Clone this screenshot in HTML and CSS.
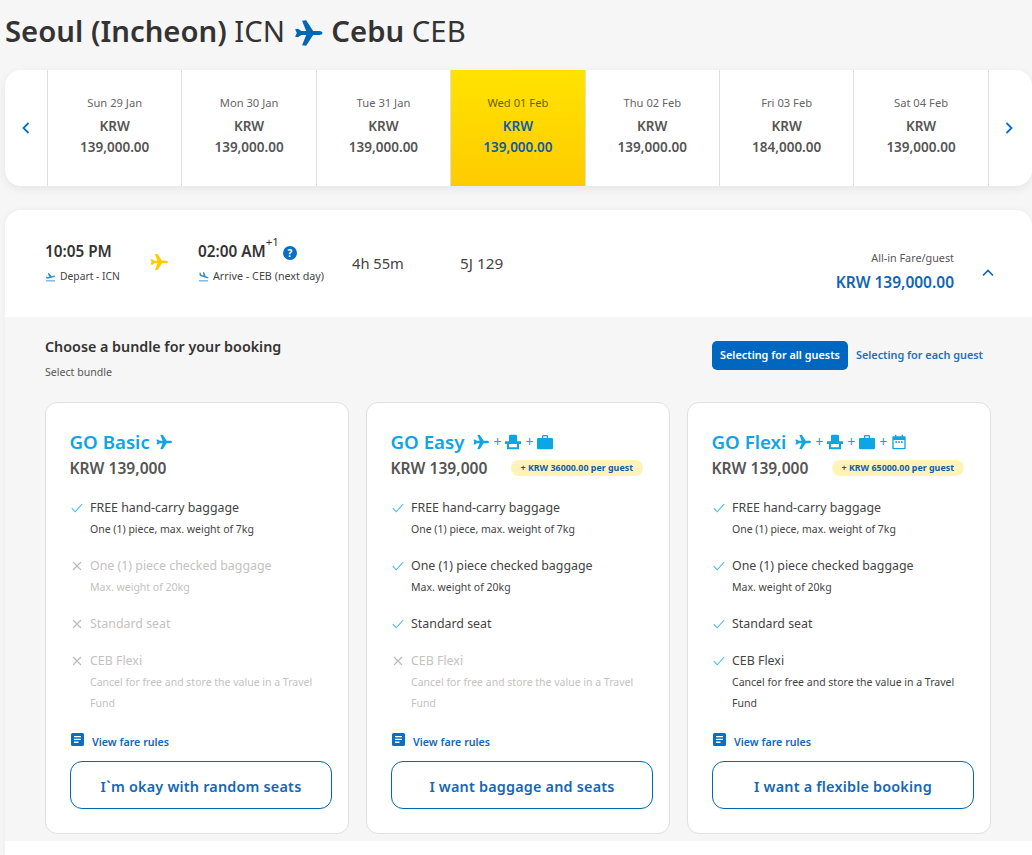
FILE: index.html
```html
<!DOCTYPE html>
<html lang="en">
<head>
<meta charset="utf-8">
<title>Select flight</title>
<link rel="stylesheet" href="styles.css">
</head>
<body>
<svg class="defs" width="0" height="0" aria-hidden="true">
  <symbol id="plane" viewBox="0 0 24 24"><path d="M.5 8.800 3 8.300 5.800 10.300h4.200L6.500 1.500 10 1l6 9.300h5c1.700 0 3 .8 3 1.700s-1.300 1.700-3 1.700h-5L10 23l-3.500-.5 3.500-8.800H5.800L3 15.700.5 15.200 2 12z"/></symbol>
  <symbol id="seat" viewBox="0 0 24 24"><path d="M8 1h8a2 2 0 0 1 2 2v8H6V3a2 2 0 0 1 2-2zM0 11h24v4h-3v8H3v-8H0zM6 15v5h12v-5z" fill-rule="evenodd"/></symbol>
  <symbol id="bag" viewBox="0 0 24 24"><path d="M7.500 6V3.500A2 2 0 0 1 9.500 1.500h5a2 2 0 0 1 2 2V6H22a2 2 0 0 1 2 2v13a2 2 0 0 1-2 2H2a2 2 0 0 1-2-2V8a2 2 0 0 1 2-2zM9.500 3.500V6h5V3.500z" fill-rule="evenodd"/></symbol>
  <symbol id="cal" viewBox="0 0 24 24"><path d="M6 1h2v2.500h8V1h2v2.500h2.500A1.500 1.500 0 0 1 22 5v16.500a1.500 1.500 0 0 1-1.500 1.500h-17A1.500 1.500 0 0 1 2 21.500V5a1.500 1.500 0 0 1 1.500-1.500H6zM4 9v12h16V9zM6.500 11h2.500v2.500H6.500zM10.800 11h2.500v2.500h-2.500zM15 11h2.500v2.500H15z" fill-rule="evenodd"/></symbol>
  <symbol id="check" viewBox="0 0 12 10"><path d="M.8 5.200 4.200 8.800 11.200 1" fill="none" stroke="currentColor" stroke-width="1.100"/></symbol>
  <symbol id="cross" viewBox="0 0 10 10"><path d="M1 1l8 8M9 1 1 9" fill="none" stroke="currentColor" stroke-width="1.100"/></symbol>
  <symbol id="doc" viewBox="0 0 13 13"><path d="M1.500 0h10A1.500 1.500 0 0 1 13 1.500v10a1.500 1.500 0 0 1-1.500 1.500h-10A1.500 1.500 0 0 1 0 11.500v-10A1.500 1.500 0 0 1 1.500 0zM3 3v1.300h7V3zM3 5.800v1.300h7V5.800zM3 8.600v1.300h4.500V8.600z" fill-rule="evenodd"/></symbol>
</svg>

<main class="page">
  <h1 class="route">
    <b>Seoul (Incheon)</b> ICN
    <svg class="route-plane"><use href="#plane"/></svg>
    <b>Cebu</b> CEB
  </h1>

  <section class="dates">
    <button class="nav nav-prev"><svg width="8" height="12" viewBox="0 0 8 12"><path d="M6.500 1 1.500 6l5 5" fill="none" stroke="currentColor" stroke-width="1.800"/></svg></button>
    <div class="day"><span class="day-name">Sun 29 Jan</span><strong>KRW</strong><strong>139,000.00</strong></div>
    <div class="day"><span class="day-name">Mon 30 Jan</span><strong>KRW</strong><strong>139,000.00</strong></div>
    <div class="day"><span class="day-name">Tue 31 Jan</span><strong>KRW</strong><strong>139,000.00</strong></div>
    <div class="day day-on"><span class="day-name">Wed 01 Feb</span><strong>KRW</strong><strong>139,000.00</strong></div>
    <div class="day"><span class="day-name">Thu 02 Feb</span><strong>KRW</strong><strong>139,000.00</strong></div>
    <div class="day"><span class="day-name">Fri 03 Feb</span><strong>KRW</strong><strong>184,000.00</strong></div>
    <div class="day"><span class="day-name">Sat 04 Feb</span><strong>KRW</strong><strong>139,000.00</strong></div>
    <button class="nav nav-next"><svg width="8" height="12" viewBox="0 0 8 12"><path d="M1.500 1 6.500 6l-5 5" fill="none" stroke="currentColor" stroke-width="1.800"/></svg></button>
  </section>

  <section class="panel">
    <header class="flight">
      <div class="time-col dep">
        <div class="time">10:05 PM</div>
        <div class="sub"><svg class="sub-icon" viewBox="0 0 12 12"><path d="M1 7.500 1.600 6l1.400.8 1.700-.4L3 2.700l1.300-.4 3 3.500 2.400-.7c.6-.2 1.200 0 1.300.4s-.2.800-.8 1L3 8.400z"/><rect x="1" y="10" width="10" height="1.400" opacity=".7"/></svg>Depart - ICN</div>
      </div>
      <svg class="flight-plane"><use href="#plane"/></svg>
      <div class="time-col arr">
        <div class="time">02:00 AM<sup>+1</sup><span class="help">?</span></div>
        <div class="sub"><svg class="sub-icon" viewBox="0 0 12 12"><path d="M1.500 2l1.200-.3 1 2.600 2.200.6L5.500 1l1.300.3 1.600 4.500 2.300.7c.6.200.9.600.8 1s-.7.500-1.300.3L2 5.500z"/><rect x="1" y="10" width="10" height="1.400" opacity=".7"/></svg>Arrive - CEB (next day)</div>
      </div>
      <div class="duration">4h 55m</div>
      <div class="flight-no">5J 129</div>
      <div class="fare">
        <div class="fare-label">All-in Fare/guest</div>
        <div class="fare-price">KRW 139,000.00</div>
      </div>
      <svg class="collapse" width="12" height="8" viewBox="0 0 12 8"><path d="M1 6.500 6 1.500l5 5" fill="none" stroke="currentColor" stroke-width="1.700"/></svg>
    </header>

    <div class="bundles">
      <div class="bundles-head">
        <div>
          <h2>Choose a bundle for your booking</h2>
          <p class="select">Select bundle</p>
        </div>
        <div class="toggle">
          <span class="toggle-on">Selecting for all guests</span>
          <span class="toggle-off">Selecting for each guest</span>
        </div>
      </div>

      <div class="cards">
        <article class="card">
          <h3>GO Basic <span class="icons icons-basic"><svg class="ic"><use href="#plane"/></svg></span></h3>
          <div class="price-row"><span class="price">KRW 139,000</span></div>
          <ul class="feat">
            <li><svg class="mark yes"><use href="#check"/></svg><div>FREE hand-carry baggage<small>One (1) piece, max. weight of 7kg</small></div></li>
            <li class="off"><svg class="mark"><use href="#cross"/></svg><div>One (1) piece checked baggage<small>Max. weight of 20kg</small></div></li>
            <li class="off"><svg class="mark"><use href="#cross"/></svg><div>Standard seat</div></li>
            <li class="off"><svg class="mark"><use href="#cross"/></svg><div>CEB Flexi<small>Cancel for free and store the value in a Travel Fund</small></div></li>
          </ul>
          <a class="rules"><svg class="doc"><use href="#doc"/></svg>View fare rules</a>
          <button class="cta">I`m okay with random seats</button>
        </article>

        <article class="card">
          <h3>GO Easy <span class="icons"><svg class="ic"><use href="#plane"/></svg><i>+</i><svg class="ic"><use href="#seat"/></svg><i>+</i><svg class="ic"><use href="#bag"/></svg></span></h3>
          <div class="price-row"><span class="price">KRW 139,000</span><span class="extra">+ KRW 36000.00 per guest</span></div>
          <ul class="feat">
            <li><svg class="mark yes"><use href="#check"/></svg><div>FREE hand-carry baggage<small>One (1) piece, max. weight of 7kg</small></div></li>
            <li><svg class="mark yes"><use href="#check"/></svg><div>One (1) piece checked baggage<small>Max. weight of 20kg</small></div></li>
            <li><svg class="mark yes"><use href="#check"/></svg><div>Standard seat</div></li>
            <li class="off"><svg class="mark"><use href="#cross"/></svg><div>CEB Flexi<small>Cancel for free and store the value in a Travel Fund</small></div></li>
          </ul>
          <a class="rules"><svg class="doc"><use href="#doc"/></svg>View fare rules</a>
          <button class="cta">I want baggage and seats</button>
        </article>

        <article class="card">
          <h3>GO Flexi <span class="icons"><svg class="ic"><use href="#plane"/></svg><i>+</i><svg class="ic"><use href="#seat"/></svg><i>+</i><svg class="ic"><use href="#bag"/></svg><i>+</i><svg class="ic"><use href="#cal"/></svg></span></h3>
          <div class="price-row"><span class="price">KRW 139,000</span><span class="extra">+ KRW 65000.00 per guest</span></div>
          <ul class="feat">
            <li><svg class="mark yes"><use href="#check"/></svg><div>FREE hand-carry baggage<small>One (1) piece, max. weight of 7kg</small></div></li>
            <li><svg class="mark yes"><use href="#check"/></svg><div>One (1) piece checked baggage<small>Max. weight of 20kg</small></div></li>
            <li><svg class="mark yes"><use href="#check"/></svg><div>Standard seat</div></li>
            <li><svg class="mark yes"><use href="#check"/></svg><div>CEB Flexi<small>Cancel for free and store the value in a Travel Fund</small></div></li>
          </ul>
          <a class="rules"><svg class="doc"><use href="#doc"/></svg>View fare rules</a>
          <button class="cta">I want a flexible booking</button>
        </article>
      </div>
    </div>
  </section>
</main>
</body>
</html>
```
FILE: styles.css
```css
* { box-sizing: border-box; }
html, body { margin: 0; height: 855px; overflow: hidden; }
body { background: #f6f6f6; font-family: "Noto Sans", "Open Sans", sans-serif; color: #333; }
.defs { position: absolute; }
.page { padding-left: 5px; }
svg { fill: currentColor; }

.route { margin: 0; height: 70px; padding-top: 10px; font-size: 29.300px; line-height: 42px; font-weight: 400; color: #333; white-space: nowrap; }
.route b { font-weight: 600; }
.route-plane { width: 29px; height: 28px; color: #0067b1; vertical-align: -5px; margin: 0 1px; }

.dates { display: grid; grid-template-columns: 42px repeat(7, 134.400px) 1fr; height: 116px; background: #fff; border-radius: 16px; box-shadow: 0 3px 10px rgba(0,0,0,.07); overflow: hidden; }
.nav { border: 0; background: none; padding: 0; color: #0a6fc2; display: flex; align-items: center; justify-content: center; }
.nav-prev { padding-right: 1px; }
.day { border-left: 1px solid #dfdfdf; display: flex; flex-direction: column; align-items: center; padding-top: 25px; color: #555; }
.day-name { font-size: 11.200px; line-height: 16px; margin-bottom: 5px; color: #666; }
.day strong { font-size: 13.500px; line-height: 20.500px; font-weight: 600; }
.day-on { background: linear-gradient(#ffe300, #ffcb00); color: #0f5ba8; }
.day-on .day-name { color: #6b6210; }
.nav-next { border-left: 1px solid #dfdfdf; padding-right: 3px; }

.panel { margin-top: 24px; background: #fff; border-radius: 16px 16px 0 0; box-shadow: 0 0 6px rgba(0,0,0,.05); height: 645px; }
.flight { height: 107px; display: flex; align-items: flex-start; padding: 0 0 0 40px; position: relative; }
.time-col { padding-top: 31px; }
.dep { width: 105px; }
.arr { width: 154px; }
.time { font-size: 15.300px; line-height: 21px; font-weight: 600; color: #333; white-space: nowrap; display: flex; align-items: center; }
.time sup { font-size: 11.500px; font-weight: 400; line-height: 1; align-self: flex-start; margin-top: -5px; }
.help { width: 14px; height: 14px; margin-left: 4px; margin-top: 2px; border-radius: 50%; background: #0a6fc2; color: #fff; font-size: 10px; line-height: 14px; font-weight: 700; text-align: center; }
.sub { font-size: 10.500px; line-height: 16px; margin-top: 6px; color: #444; white-space: nowrap; display: flex; align-items: center; }
.sub-icon { width: 11px; height: 11px; margin-right: 4px; color: #2e8fd6; }
.dep .sub { font-size: 10.300px; }
.arr .sub { font-size: 10.750px; }
.flight-plane { width: 18px; height: 18px; color: #ffcc00; margin: 43px 30px 0 0; }
.duration { width: 108px; padding-top: 43px; font-size: 14.700px; line-height: 20px; color: #444; white-space: nowrap; }
.flight-no { padding-top: 43px; font-size: 15.300px; line-height: 20px; color: #444; white-space: nowrap; }
.fare { position: absolute; right: 78px; top: 40px; text-align: right; }
.fare-label { font-size: 10.800px; line-height: 16px; color: #555; }
.fare-price { margin-top: 5px; font-size: 15.500px; line-height: 22px; font-weight: 600; color: #0f66b3; }
.collapse { position: absolute; right: 38px; top: 59px; color: #0f66b3; }

.bundles { background: #f6f6f6; height: 524px; padding: 0 40px; }
.bundles-head { height: 85px; display: flex; justify-content: space-between; }
h2 { margin: 0; padding-top: 18px; font-size: 14.300px; line-height: 23px; font-weight: 600; color: #333; }
.select { margin: 6px 0 0; font-size: 10.600px; line-height: 16px; color: #555; }
.toggle { display: flex; align-items: center; align-self: flex-start; margin-top: 24px; margin-right: 9px; gap: 8px; font-size: 10.850px; font-weight: 600; white-space: nowrap; }
.toggle-on { height: 29px; line-height: 28px; padding: 0 8px; border-radius: 5px; background: #0067c0; color: #fff; }
.toggle-off { color: #1f6fbd; line-height: 27px; height: 29px; }

.cards { display: grid; grid-template-columns: repeat(3, 304px); gap: 17px; }
.card { height: 432px; background: #fff; border: 1px solid #e0e0e0; border-radius: 12px; padding: 24px 16px 24px 24px; display: flex; flex-direction: column; }
h3 { margin: 0 0 0 -.5px; font-size: 18.700px; line-height: 30px; height: 30px; font-weight: 600; color: #0ea5e4; white-space: nowrap; display: flex; align-items: center; gap: 9px; }
.icons { display: inline-flex; align-items: center; color: #0ea5e4; }
.icons-basic { margin-left: -3px; }
.icons i { font-style: normal; font-weight: 400; font-size: 14px; width: 16px; text-align: center; }
.ic { width: 16px; height: 16px; }
.price-row { display: flex; align-items: center; justify-content: space-between; height: 22px; padding-right: 10px; margin-left: -.5px; }
.price { font-size: 15.600px; font-weight: 600; color: #555; white-space: nowrap; }
.extra { background: #fff3b8; border-radius: 8px; height: 16px; line-height: 16px; padding: 0 10px; font-size: 8.900px; font-weight: 700; color: #0f5ba8; white-space: nowrap; }

.feat { list-style: none; margin: 19px 0 0; padding: 0; height: 234px; color: #444; font-size: 12.400px; line-height: 20px; }
.feat li { display: flex; margin-bottom: 17px; }
.feat li > div { flex: 1; }
.feat small { display: block; font-size: 10.500px; line-height: 21px; margin: 1px 0 -1px; color: #444; }
.mark { width: 12px; height: 10px; margin: 5px 7px 0 1px; flex: none; color: #b9b9b9; }
.mark.yes { color: #45bde8; }
.off, .off small { color: #c4c2c2; }

.rules { display: flex; align-items: flex-end; font-size: 10.700px; font-weight: 600; line-height: 14px; height: 16px; color: #1567b5; margin-top: 1px; }
.doc { width: 13px; height: 13px; margin: 0 8px 3px 1px; color: #0a6fc2; }
.cta { margin-top: 12px; height: 48px; width: 262px; padding: 3px 0 0; border: 1px solid #0067b1; border-radius: 12px; background: #fff; color: #1567b5; font: 600 14.400px/20px "Noto Sans", sans-serif; letter-spacing: .2px; }
```
